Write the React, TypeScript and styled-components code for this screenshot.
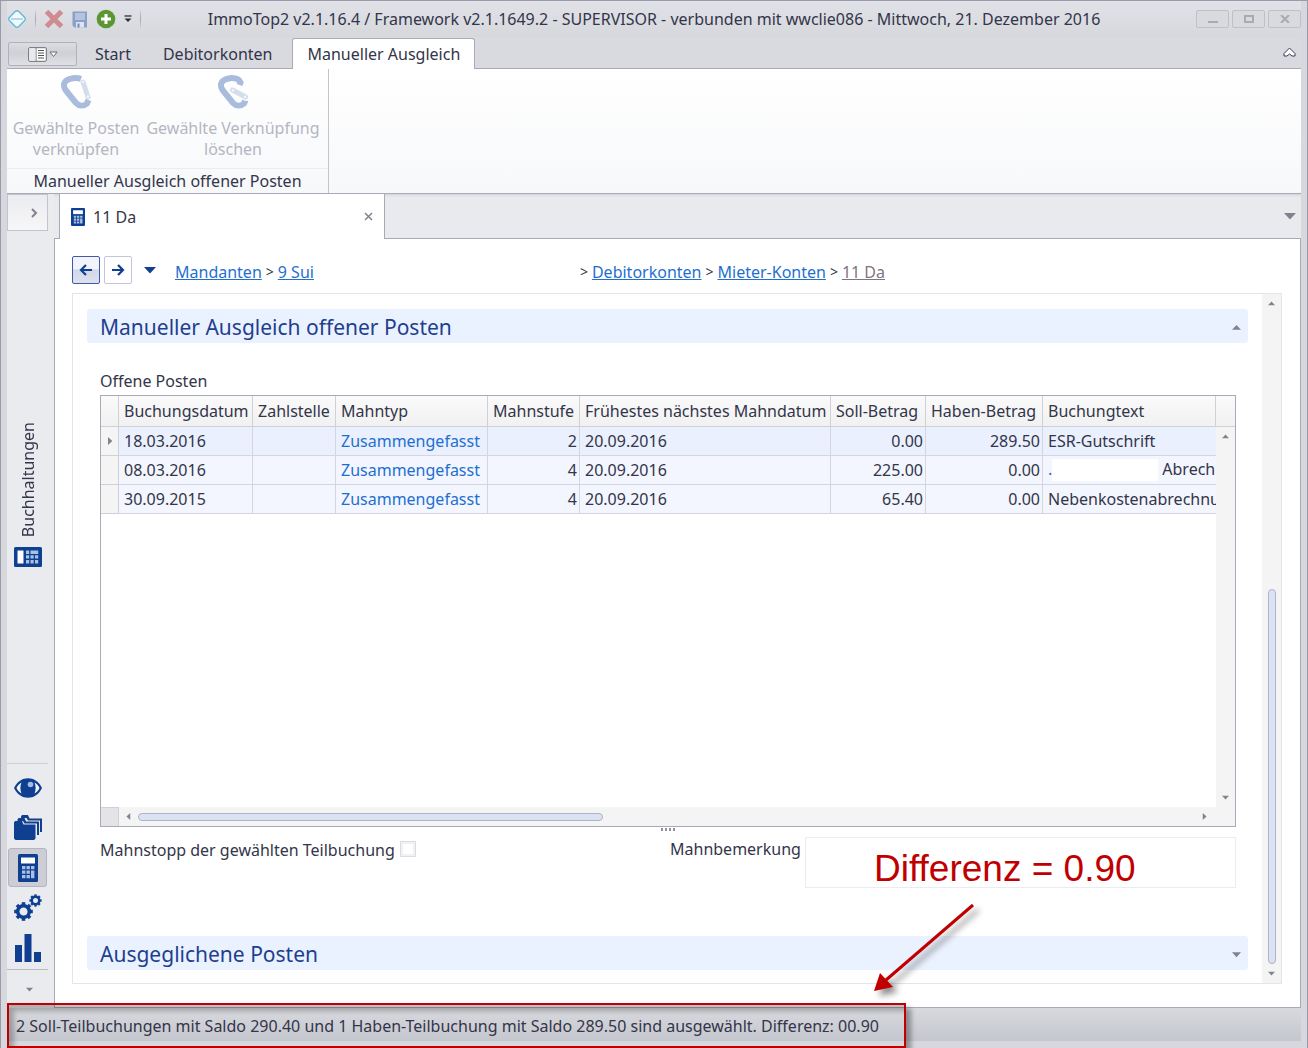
import React from "react";
import styled, { createGlobalStyle, css } from "styled-components";

const uiFont = '"Noto Sans", "Open Sans", sans-serif';
const ink = "#33354a";
const line = "#a9aab8";

const GlobalStyle = createGlobalStyle`
  *, *::before, *::after { box-sizing: border-box; }
  body { margin: 0; }
  button, input, textarea { font: inherit; color: inherit; margin: 0; }
`;

const Window = styled.div`
  position: relative;
  display: flex;
  flex-direction: column;
  min-height: 100vh;
  padding: 0 6px;
  border: 1px solid #9b9aab;
  border-bottom: 0;
  background: #d6d8de;
  font: 16px/20px ${uiFont};
  color: ${ink};
`;

const TitleBar = styled.header`
  display: grid;
  grid-template-columns: 1fr auto 1fr;
  align-items: center;
  height: 36px;
  background: linear-gradient(#e1e2e8, #d6d8dc);
`;

const Title = styled.h1`
  margin: 0;
  font-size: 16px;
  font-weight: 400;
  line-height: 20px;
  white-space: nowrap;
`;

const QuickBar = styled.div`
  display: flex;
  align-items: center;
  gap: 8px;
`;

const IconButton = styled.button`
  display: flex;
  align-items: center;
  justify-content: center;
  padding: 0;
  border: 0;
  background: none;
`;

const Divider = styled.span`
  width: 1px;
  height: 18px;
  background: linear-gradient(#d0d1d8, #a4a5b0, #d0d1d8);
`;

const WindowButtons = styled.div`
  display: flex;
  justify-content: flex-end;
  gap: 3px;
`;

const WindowButton = styled(IconButton)`
  width: 33px;
  height: 18px;
  border: 1px solid #bfc0c7;
  border-radius: 2px;
  background: #d9dade;
`;

const RibbonTabs = styled.nav`
  display: flex;
  align-items: flex-end;
  height: 32px;
  border-bottom: 1px solid ${line};
  background: #d8dadf;
`;

const AppMenu = styled(IconButton)`
  width: 69px;
  height: 24px;
  margin: 0 2px 2px 1px;
  gap: 2px;
  border: 1px solid #b0b1bb;
  border-radius: 2px;
  background: linear-gradient(#dcdde2, #cfd0d6 45%, #dfe0e4);
`;

const RibbonTab = styled.button<{ $active?: boolean }>`
  height: 29px;
  padding: 0 15px;
  border: 1px solid transparent;
  border-bottom: 0;
  background: none;
  line-height: 20px;
  white-space: nowrap;
  ${(p) =>
    p.$active &&
    css`
      height: 31px;
      margin: 0 0 -1px 4px;
      padding: 0 14px;
      border-color: ${line};
      border-radius: 3px 3px 0 0;
      background: #fff;
    `}
`;

const CollapseRibbon = styled(IconButton)`
  align-self: center;
  margin: 0 5px 0 auto;
`;

const Ribbon = styled.section`
  display: flex;
  height: 125px;
  border-bottom: 1px solid ${line};
  background: linear-gradient(#ffffff, #f7f8fa);
`;

const RibbonGroup = styled.div`
  display: flex;
  flex-direction: column;
  width: 322px;
  border-right: 1px solid #c3c4ce;
`;

const RibbonActions = styled.div`
  display: flex;
  flex: 1;
  gap: 2px;
  padding: 4px 4px 0;
`;

const RibbonAction = styled.button<{ $grow?: boolean }>`
  display: flex;
  flex-direction: column;
  align-items: center;
  width: ${(p) => (p.$grow ? "180px" : "130px")};
  gap: 8px;
  padding: 0;
  border: 0;
  background: none;
  color: #b4b6c2;
  line-height: 21px;
  white-space: nowrap;
`;

const RibbonCaption = styled.div`
  padding: 2px 0;
  border-top: 1px solid #ececf0;
  text-align: center;
  white-space: nowrap;
`;

const Body = styled.div`
  display: flex;
  flex: 1;
`;

const Sidebar = styled.aside`
  display: flex;
  flex-direction: column;
  width: 47px;
  background: #eaebef;
`;

const SidebarToggle = styled(IconButton)`
  width: 41px;
  height: 37px;
  padding: 0 9px 0 0;
  justify-content: flex-end;
  border: 1px solid #c3c4cd;
  background: linear-gradient(#ebecf0, #f6f6f8);
`;

const SidebarLabel = styled.div`
  display: flex;
  flex: 1;
  flex-direction: column;
  align-items: center;
  justify-content: flex-end;
  gap: 10px;
  width: 41px;
  padding-bottom: 196px;
`;

const VerticalText = styled.span`
  writing-mode: vertical-rl;
  transform: rotate(180deg);
  line-height: 20px;
`;

const ModuleList = styled.div`
  display: flex;
  flex-direction: column;
  gap: 1px;
  width: 41px;
  padding: 4px 0 2px;
  border-top: 1px solid #cfd0d6;
  border-bottom: 1px solid #b9bac4;
`;

const ModuleButton = styled(IconButton)<{ $active?: boolean }>`
  width: 39px;
  height: 39px;
  margin-left: 1px;
  border: 1px solid ${(p) => (p.$active ? "#b4b5c0" : "transparent")};
  border-radius: 3px;
  background: ${(p) => (p.$active ? "#cdced5" : "none")};
`;

const MoreModules = styled(IconButton)`
  width: 45px;
  height: 38px;
`;

const Main = styled.main`
  display: flex;
  flex: 1;
  flex-direction: column;
  min-width: 0;
`;

const DocTabs = styled.div`
  display: flex;
  align-items: center;
  justify-content: space-between;
  height: 44px;
  padding: 0 5px;
  background: #e9eaee;
  box-shadow: inset 0 3px 3px -2px #cfd0d6;
`;

const DocTab = styled.div`
  display: flex;
  align-items: center;
  gap: 8px;
  width: 326px;
  height: 45px;
  margin-bottom: -1px;
  padding: 0 11px;
  border: solid ${line};
  border-width: 0 1px;
  background: #fff;
  z-index: 1;

  & > button { margin-left: auto; }
`;

const Page = styled.div`
  display: flex;
  flex: 1;
  flex-direction: column;
  padding: 17px 18px 23px 17px;
  border: 1px solid ${line};
  background: #fff;
`;

const Crumbs = styled.nav`
  display: flex;
  align-items: center;
  gap: 4px;
  height: 28px;
  margin-bottom: 9px;
  white-space: nowrap;
`;

const NavButton = styled(IconButton)<{ $active?: boolean }>`
  width: 28px;
  height: 28px;
  border: 1px solid ${(p) => (p.$active ? "#3f5ca8" : "#c3c6d8")};
  border-radius: 2px;
  background: ${(p) =>
    p.$active ? "linear-gradient(#f3f4fb 45%, #d3d7e9 50%, #dde0ee)" : "#fff"};
`;

const HistoryButton = styled(IconButton)`
  width: 28px;
`;

const Trail = styled.span`
  display: flex;
  gap: 4px;
  padding: 3px 0 0 7px;
`;

const SubTrail = styled(Trail)`
  padding-left: 262px;
`;

const Crumb = styled.a<{ $current?: boolean }>`
  color: ${(p) => (p.$current ? "#7f7480" : "#1f6fd0")};
`;

const Chevron = styled.span`
  font-size: 14px;
`;

const Panel = styled.div`
  display: flex;
  flex: 1;
  border: 1px solid #e4e5e8;
`;

const PanelContent = styled.div`
  display: flex;
  flex: 1;
  flex-direction: column;
  min-width: 0;
  padding: 15px 14px 13px;
`;

const SectionHeader = styled.button`
  display: flex;
  align-items: center;
  justify-content: space-between;
  height: 34px;
  padding: 2px 7px 0 13px;
  border: 0;
  border-radius: 3px;
  background: #ebf2ff;
  color: #1e408f;
  font-size: 21px;
  line-height: 28px;
`;

const SectionBody = styled.div`
  display: flex;
  flex: 1;
  flex-direction: column;
  padding: 28px 12px 0 13px;
`;

const GridFrame = styled.div`
  display: flex;
  flex: 1;
  flex-direction: column;
  margin-top: 4px;
  border: 1px solid ${line};
`;

const GridArea = styled.div`
  display: flex;
  flex: 1;
`;

const TableClip = styled.div`
  flex: 1;
  min-width: 0;
  overflow: hidden;
`;

const Table = styled.table`
  width: 100%;
  table-layout: fixed;
  border-collapse: separate;
  border-spacing: 0;
`;

const Col = styled.col<{ $w?: number }>`
  ${(p) => p.$w && `width: ${p.$w}px;`}
`;

const Th = styled.th`
  height: 31px;
  padding: 0 0 0 5px;
  border: solid #cfd0d8;
  border-width: 0 1px 1px 0;
  background: linear-gradient(#fafafa, #f1f1f2);
  font-weight: 400;
  text-align: left;
  white-space: nowrap;
`;

const Row = styled.tr<{ $focused?: boolean }>`
  background: ${(p) => (p.$focused ? "#eaf0fe" : "#f3f6fe")};
`;

const Td = styled.td<{ $right?: boolean; $link?: boolean }>`
  height: 29px;
  padding: 0 2px 0 5px;
  border: solid #d3d5df;
  border-width: 0 1px 1px 0;
  color: ${(p) => (p.$link ? "#1f6fd0" : "inherit")};
  text-align: ${(p) => (p.$right ? "right" : "left")};
  white-space: nowrap;
  overflow: hidden;

  &:last-child { border-right: 0; padding-right: 0; }
`;

const Marker = styled.td`
  padding: 0 0 0 5px;
  border: solid #cfd0d8;
  border-width: 0 1px 1px 0;
  background: #f4f4f5;
  line-height: 0;
`;

const Blank = styled.span`
  display: inline-block;
  width: 106px;
  height: 22px;
  margin-right: 4px;
  background: #fff;
  vertical-align: -6px;
`;

const BlueDot = styled.span`
  color: #1f6fd0;
`;

const GridSide = styled.div`
  display: flex;
  flex-direction: column;
  width: 19px;
`;

const SideHead = styled.div`
  height: 31px;
  border-bottom: 1px solid #cfd0d8;
  background: linear-gradient(#fafafa, #f1f1f2);
`;

const VScroll = styled.div`
  display: flex;
  flex-direction: column;
  align-items: center;
  justify-content: space-between;
  width: 19px;
  padding: 6px 0;
  background: #f4f4f4;
`;

const GridScroll = styled(VScroll)`
  flex: 1;
`;

const VThumb = styled.div`
  flex: 0 0 375px;
  width: 8px;
  margin: auto 0 6px;
  border: 1px solid #b0b4c4;
  border-radius: 4px;
  background: #dbe2f3;
`;

const HScroll = styled.div`
  display: flex;
  align-items: center;
  height: 19px;
  padding-right: 27px;
  background: #f4f4f4;
`;

const HCorner = styled.span`
  width: 18px;
  height: 19px;
  margin-right: 6px;
  border: solid #cfd0d8;
  border-width: 1px 1px 0 0;
  background: #e3e3e8;
`;

const HTrack = styled.div`
  flex: 1;
  padding: 0 6px;
`;

const HThumb = styled.div`
  width: 44%;
  height: 8px;
  border: 1px solid #b0b4c4;
  border-radius: 4px;
  background: #dbe2f3;
`;

const Splitter = styled.div`
  display: flex;
  justify-content: center;
  gap: 2px;
  height: 10px;
  padding-top: 1px;

  & > i { width: 2px; height: 3px; background: #8f919f; }
`;

const FormRow = styled.div`
  display: flex;
  height: 51px;
`;

const CheckField = styled.div`
  display: flex;
  align-items: flex-start;
  gap: 5px;
  flex: 0 0 570px;
  padding-top: 3px;
  white-space: nowrap;
`;

const Check = styled.input`
  appearance: none;
  width: 16px;
  height: 16px;
  margin-top: 1px;
  border: 3px solid #f1f1f3;
  outline: 1px solid #dcdde2;
  outline-offset: -1px;
  background: #fff;
`;

const NoteField = styled.div`
  position: relative;
  display: flex;
  flex: 1;

  & > label { width: 135px; padding-top: 2px; }
`;

const Note = styled.textarea`
  flex: 1;
  min-width: 0;
  border: 1px solid #ebecef;
  background: #fff;
  resize: none;
`;

const Callout = styled.strong`
  position: absolute;
  top: 12px;
  left: 204px;
  color: #c00000;
  font: 400 37px/40px "Liberation Sans", Arial, sans-serif;
  white-space: nowrap;
  pointer-events: none;
`;

const ArrowDrawing = styled.svg`
  position: absolute;
  top: 62px;
  left: 196px;
  overflow: visible;
  filter: drop-shadow(5px 5px 3px rgba(0, 0, 0, 0.45));
  pointer-events: none;
  z-index: 2;
`;

const FooterSection = styled.div`
  display: flex;
  flex-direction: column;
  padding-top: 48px;
`;

const StatusBar = styled.footer`
  position: relative;
  height: 40px;
  padding: 8px 9px 0;
  background: linear-gradient(#d8d9de, #c5c7ce 82%, #d6d8de 84%);
  white-space: nowrap;
`;

const StatusMark = styled.span`
  position: absolute;
  top: -5px;
  left: 0;
  width: 899px;
  height: 45px;
  border: 2px solid #c00000;
  box-shadow: 5px 5px 5px rgba(0, 0, 0, 0.35), inset 5px 6px 5px rgba(0, 0, 0, 0.25);
  pointer-events: none;
`;

type Dir = "up" | "down" | "left" | "right";
const turns: Record<Dir, number> = { up: 180, down: 0, left: 90, right: 270 };

function Caret({ dir = "down", size = 8, color = "#80828f" }: { dir?: Dir; size?: number; color?: string }) {
  return (
    <svg width={size} height={size} viewBox="0 0 12 12" aria-hidden="true">
      <path d="M0 3h12L6 9.500z" fill={color} transform={`rotate(${turns[dir]} 6 6)`} />
    </svg>
  );
}

function LogoIcon() {
  return (
    <svg width="20" height="20" viewBox="0 0 20 20" aria-hidden="true">
      <rect x="3.500" y="3.500" width="13" height="13" rx="2.500" transform="rotate(45 10 10)" fill="#f3f8fb" stroke="#5db9d8" strokeWidth="1.300" />
      <path d="M4 10h12" stroke="#9fd2e4" strokeWidth="1.600" />
    </svg>
  );
}

function CrossIcon() {
  return (
    <svg width="20" height="20" viewBox="0 0 20 20" aria-hidden="true">
      <path d="M2.500 2.500L17.500 17.500M17.500 2.500L2.500 17.500" stroke="#d08b90" strokeWidth="5" />
    </svg>
  );
}

function SaveIcon() {
  return (
    <svg width="16" height="17" viewBox="0 0 16 17" aria-hidden="true">
      <path d="M1 .5h14v16H2.500L.5 14.500V1z" fill="#8aa0c8" />
      <path d="M3 2h10v7H3z" fill="#b4c3de" />
      <path d="M4 11h8v5.500H4z" fill="#dfe5f0" />
      <path d="M5.500 12.500h2v4h-2z" fill="#6f89b8" />
    </svg>
  );
}

function AddIcon() {
  return (
    <svg width="20" height="20" viewBox="0 0 20 20" aria-hidden="true">
      <circle cx="10" cy="10" r="9.300" fill="#5a9632" />
      <path d="M10 5v10M5 10h10" stroke="#fff" strokeWidth="3" />
    </svg>
  );
}

function MenuCaret() {
  return (
    <svg width="8" height="8" viewBox="0 0 8 8" aria-hidden="true">
      <path d="M.5 1h7" stroke="#2a2c3a" strokeWidth="1.300" />
      <path d="M.5 3.500h7L4 7z" fill="#2a2c3a" />
    </svg>
  );
}

function PaneIcon() {
  return (
    <svg width="19" height="15" viewBox="0 0 19 15" fill="none" aria-hidden="true">
      <rect x=".7" y=".7" width="17.600" height="13.600" rx="1" fill="#fff" stroke="#696a74" />
      <path d="M8 1v13" stroke="#696a74" />
      <path d="M10 3.500h6M10 6h6M10 8.500h6M10 11h6" stroke="#555" strokeWidth="1.200" />
      <path d="M1.500 1.500h6v12h-6z" fill="#e8e9ed" />
    </svg>
  );
}

function Carabiner({ open }: { open?: boolean }) {
  return (
    <svg width="32" height="37" viewBox="0 0 32 37" fill="none" aria-hidden="true">
      <path
        d={
          open
            ? "M22.500 12L23.500 9.500C22 6 18 4.800 13 5.200C4.500 6.500 2 11 5.500 17L16 30C19 33.200 23.500 33.500 27 30.500L28.500 27"
            : "M21 6C18.500 5 16 5 13 5.200C4.500 6.500 2 11 5.500 17L16 30C19 33.200 23.500 33.500 27 30.500L28.500 27"
        }
        stroke="#a9bcdd"
        strokeWidth="6"
      />
      {open && <path d="M15.500 17L28.500 24" stroke="#fdfdfe" strokeWidth="7.600" strokeLinecap="round" />}
      <path d={open ? "M15.500 17L28.500 24" : "M23 9L28 24"} stroke="#d3deed" strokeWidth="5" strokeLinecap="round" />
      <circle cx={open ? 16 : 23} cy={open ? 17.200 : 9} r="1.200" fill="#f4f7fb" />
      <circle cx="28" cy={open ? 23.800 : 23.500} r="1.200" fill="#f4f7fb" />
    </svg>
  );
}

const navy = "#0f3f90";

function CalculatorIcon({ width, height }: { width: number; height: number }) {
  return (
    <svg width={width} height={height} viewBox="0 0 20 28" preserveAspectRatio="none" aria-hidden="true">
      <rect width="20" height="28" rx="1.500" fill={navy} />
      <path d="M3 3.500h14v6H3z" fill="#fff" />
      <path
        d="M4 12h3.400v3.200H4zM8.500 12h3.400v3.200H8.500zM13 12h3.400v3.200H13zM4 16.500h3.400v3.200H4zM8.500 16.500h3.400v3.200H8.500zM4 21h3.400v3.200H4zM8.500 21h3.400v3.200H8.500zM13 16.500h3.400v7.700H13z"
        fill="#a9c0e4"
      />
    </svg>
  );
}

function LedgerIcon() {
  return (
    <svg width="28" height="20" viewBox="0 0 28 20" aria-hidden="true">
      <rect width="28" height="20" rx="1.500" fill={navy} />
      <path d="M3.500 3.500h6v13h-6z" fill="#fff" />
      <path
        d="M12 3.500h3.200v3.400H12zM12 8.200h3.200v3.400H12zM12 13h3.200v3.500H12zM16.500 3.500h7.700v3.400h-7.700zM16.500 8.200h3.200v3.400h-3.200zM16.500 13h3.200v3.500h-3.200zM21 8.200h3.200v3.400H21zM21 13h3.200v3.500H21z"
        fill="#a9c0e4"
      />
    </svg>
  );
}

function EyeIcon() {
  return (
    <svg width="28" height="20" viewBox="0 0 28 20" aria-hidden="true">
      <path d="M0 10C6-3 22-3 28 10C22 23 6 23 0 10z" fill={navy} />
      <path d="M2.500 10C3.500 7.500 5.500 5.500 7.500 4.500C6 8 6 12 7.500 15.500C5.500 14.500 3.500 12.500 2.500 10zM25.500 10C24.500 7.500 22.500 5.500 20.500 4.500C22 8 22 12 20.500 15.500C22.500 14.500 24.500 12.500 25.500 10z" fill="#f3f5f9" />
      <circle cx="16.500" cy="6.500" r="2.800" fill="#9fc0e4" />
    </svg>
  );
}

function FoldersIcon() {
  return (
    <svg width="28" height="25" viewBox="0 0 28 25" fill={navy} aria-hidden="true">
      <path d="M7 3V1.500L8 0h6l1.500 3.500H28V17h-2V5.500H14L12.500 3z" />
      <path d="M3.500 6V4.500L4.500 3h6L12 6.500h13V20h-2V8.500H10.500L9 6z" />
      <path d="M0 7.500L1 6h7l1.500 3.500H21.500V23.500L20 25H1.500L0 23.500z" />
    </svg>
  );
}

function Gear({ cx, cy, r, w }: { cx: number; cy: number; r: number; w: number }) {
  const teeth = [0, 45, 90, 135, 180, 225, 270, 315];
  return (
    <g>
      <circle cx={cx} cy={cy} r={r} fill="none" stroke={navy} strokeWidth={w} />
      {teeth.map((a) => (
        <rect key={a} x={cx - w / 2} y={cy - r - w} width={w} height={w} fill={navy} transform={`rotate(${a} ${cx} ${cy})`} />
      ))}
    </g>
  );
}

function GearsIcon() {
  return (
    <svg width="28" height="28" viewBox="0 0 28 28" aria-hidden="true">
      <Gear cx={9.500} cy={17.500} r={5.800} w={3.500} />
      <Gear cx={21.500} cy={6.500} r={3.700} w={2.400} />
    </svg>
  );
}

function ChartIcon() {
  return (
    <svg width="26" height="28" viewBox="0 0 26 28" aria-hidden="true">
      <path d="M0 11h7v17H0zM9.500 0h7v28h-7zM19 18h7v10h-7z" fill={navy} />
    </svg>
  );
}

function ArrowIcon({ back }: { back?: boolean }) {
  return (
    <svg width="14" height="12" viewBox="0 0 14 12" fill="none" aria-hidden="true">
      <path d={back ? "M13 6H2.500M7 1L2 6L7 11" : "M1 6H11.500M7 1L12 6L7 11"} stroke={navy} strokeWidth="2.200" />
    </svg>
  );
}

interface Posting {
  date: string;
  level: number;
  debit: string;
  credit: string;
  text: React.ReactNode;
}

const postings: Posting[] = [
  { date: "18.03.2016", level: 2, debit: "0.00", credit: "289.50", text: "ESR-Gutschrift" },
  { date: "08.03.2016", level: 4, debit: "225.00", credit: "0.00", text: <><BlueDot>.</BlueDot><Blank />Abrech</> },
  { date: "30.09.2015", level: 4, debit: "65.40", credit: "0.00", text: "Nebenkostenabrechnung" },
];

const columns: { label: string; width?: number }[] = [
  { label: "Buchungsdatum", width: 134 },
  { label: "Zahlstelle", width: 83 },
  { label: "Mahntyp", width: 152 },
  { label: "Mahnstufe", width: 92 },
  { label: "Frühestes nächstes Mahndatum", width: 251 },
  { label: "Soll-Betrag", width: 95 },
  { label: "Haben-Betrag", width: 117 },
  { label: "Buchungtext" },
];

export default function App() {
  return (
    <Window>
      <GlobalStyle />
      <TitleBar>
        <QuickBar>
          <LogoIcon />
          <Divider />
          <IconButton aria-label="Abbrechen"><CrossIcon /></IconButton>
          <IconButton aria-label="Speichern"><SaveIcon /></IconButton>
          <IconButton aria-label="Neu"><AddIcon /></IconButton>
          <IconButton aria-label="Anpassen"><MenuCaret /></IconButton>
          <Divider />
        </QuickBar>
        <Title>ImmoTop2 v2.1.16.4 / Framework v2.1.1649.2 - SUPERVISOR - verbunden mit wwclie086 - Mittwoch, 21. Dezember 2016</Title>
        <WindowButtons>
          <WindowButton aria-label="Minimieren">
            <svg width="12" height="8" viewBox="0 0 12 8"><path d="M1 7h10" stroke="#a9aab3" strokeWidth="2" /></svg>
          </WindowButton>
          <WindowButton aria-label="Maximieren">
            <svg width="10" height="8" viewBox="0 0 10 8"><rect x="1" y="1" width="8" height="6" fill="none" stroke="#a9aab3" strokeWidth="2" /></svg>
          </WindowButton>
          <WindowButton aria-label="Schliessen">
            <svg width="10" height="8" viewBox="0 0 10 8"><path d="M1 0l8 8M9 0L1 8" stroke="#a9aab3" strokeWidth="2" /></svg>
          </WindowButton>
        </WindowButtons>
      </TitleBar>

      <RibbonTabs>
        <AppMenu aria-label="Menü">
          <PaneIcon />
          <svg width="9" height="7" viewBox="0 0 9 7"><path d="M1 1h7L4.500 5.500z" fill="#fff" stroke="#696a74" /></svg>
        </AppMenu>
        <RibbonTab>Start</RibbonTab>
        <RibbonTab>Debitorkonten</RibbonTab>
        <RibbonTab $active>Manueller Ausgleich</RibbonTab>
        <CollapseRibbon aria-label="Menüband minimieren">
          <svg width="13" height="11" viewBox="0 0 13 11">
            <path d="M6.500 1L12 6.500V9H9L6.500 7L4 9H1V6.500z" fill="#fff" stroke="#3a3c50" strokeLinejoin="round" />
          </svg>
        </CollapseRibbon>
      </RibbonTabs>

      <Ribbon>
        <RibbonGroup>
          <RibbonActions>
            <RibbonAction>
              <Carabiner />
              <span>Gewählte Posten<br />verknüpfen</span>
            </RibbonAction>
            <RibbonAction $grow>
              <Carabiner open />
              <span>Gewählte Verknüpfung<br />löschen</span>
            </RibbonAction>
          </RibbonActions>
          <RibbonCaption>Manueller Ausgleich offener Posten</RibbonCaption>
        </RibbonGroup>
      </Ribbon>

      <Body>
        <Sidebar>
          <SidebarToggle aria-label="Navigation öffnen">
            <svg width="8" height="10" viewBox="0 0 8 10"><path d="M2 1l4 4l-4 4" fill="none" stroke="#80828f" strokeWidth="2" /></svg>
          </SidebarToggle>
          <SidebarLabel>
            <VerticalText>Buchhaltungen</VerticalText>
            <LedgerIcon />
          </SidebarLabel>
          <ModuleList>
            <ModuleButton aria-label="Übersicht"><EyeIcon /></ModuleButton>
            <ModuleButton aria-label="Ordner"><FoldersIcon /></ModuleButton>
            <ModuleButton aria-label="Buchhaltungen" $active><CalculatorIcon width={20} height={28} /></ModuleButton>
            <ModuleButton aria-label="Einstellungen"><GearsIcon /></ModuleButton>
            <ModuleButton aria-label="Auswertungen"><ChartIcon /></ModuleButton>
          </ModuleList>
          <MoreModules aria-label="Weitere"><Caret size={7} /></MoreModules>
        </Sidebar>

        <Main>
          <DocTabs>
            <DocTab>
              <CalculatorIcon width={14} height={18} />
              <span>11 Da</span>
              <IconButton aria-label="Register schliessen">
                <svg width="9" height="9" viewBox="0 0 9 9"><path d="M1 1l7 7M8 1L1 8" stroke="#80828f" strokeWidth="1.500" /></svg>
              </IconButton>
            </DocTab>
            <IconButton aria-label="Registerliste"><Caret size={12} /></IconButton>
          </DocTabs>

          <Page>
            <Crumbs>
              <NavButton $active aria-label="Zurück"><ArrowIcon back /></NavButton>
              <NavButton aria-label="Vorwärts"><ArrowIcon /></NavButton>
              <HistoryButton aria-label="Verlauf"><Caret size={12} color={navy} /></HistoryButton>
              <Trail>
                <Crumb href="#mandanten">Mandanten</Crumb>
                <Chevron>&gt;</Chevron>
                <Crumb href="#mandant">9 Sui</Crumb>
              </Trail>
              <SubTrail>
                <Chevron>&gt;</Chevron>
                <Crumb href="#debitorkonten">Debitorkonten</Crumb>
                <Chevron>&gt;</Chevron>
                <Crumb href="#mieter">Mieter-Konten</Crumb>
                <Chevron>&gt;</Chevron>
                <Crumb href="#konto" $current>11 Da</Crumb>
              </SubTrail>
            </Crumbs>

            <Panel>
              <PanelContent>
                <SectionHeader>
                  Manueller Ausgleich offener Posten
                  <Caret dir="up" size={9} />
                </SectionHeader>
                <SectionBody>
                  <span>Offene Posten</span>
                  <GridFrame>
                    <GridArea>
                      <TableClip>
                        <Table>
                          <colgroup>
                            <Col $w={18} />
                            {columns.map((c) => <Col key={c.label} $w={c.width} />)}
                          </colgroup>
                          <thead>
                            <tr>
                              <Th />
                              {columns.map((c) => <Th key={c.label}>{c.label}</Th>)}
                            </tr>
                          </thead>
                          <tbody>
                            {postings.map((p, i) => (
                              <Row key={p.date} $focused={i === 0}>
                                <Marker>{i === 0 && <Caret dir="right" />}</Marker>
                                <Td>{p.date}</Td>
                                <Td />
                                <Td $link>Zusammengefasst</Td>
                                <Td $right>{p.level}</Td>
                                <Td>20.09.2016</Td>
                                <Td $right>{p.debit}</Td>
                                <Td $right>{p.credit}</Td>
                                <Td>{p.text}</Td>
                              </Row>
                            ))}
                          </tbody>
                        </Table>
                      </TableClip>
                      <GridSide>
                        <SideHead />
                        <GridScroll>
                          <Caret dir="up" size={7} />
                          <Caret size={7} />
                        </GridScroll>
                      </GridSide>
                    </GridArea>
                    <HScroll>
                      <HCorner />
                      <Caret dir="left" size={7} />
                      <HTrack><HThumb /></HTrack>
                      <Caret dir="right" size={7} />
                    </HScroll>
                  </GridFrame>
                  <Splitter><i /><i /><i /><i /></Splitter>
                  <FormRow>
                    <CheckField>
                      <label htmlFor="mahnstopp">Mahnstopp der gewählten Teilbuchung</label>
                      <Check id="mahnstopp" type="checkbox" />
                    </CheckField>
                    <NoteField>
                      <label htmlFor="mahnbemerkung">Mahnbemerkung</label>
                      <Note id="mahnbemerkung" />
                      <Callout>Differenz = 0.90</Callout>
                      <ArrowDrawing width="110" height="96" viewBox="0 0 110 96" aria-hidden="true">
                        <path d="M107 6L20 81" stroke="#c00000" strokeWidth="3" />
                        <path d="M8 92L14 74L27 88z" fill="#c00000" />
                      </ArrowDrawing>
                    </NoteField>
                  </FormRow>
                </SectionBody>
                <FooterSection>
                  <SectionHeader>
                    Ausgeglichene Posten
                    <Caret size={9} />
                  </SectionHeader>
                </FooterSection>
              </PanelContent>
              <VScroll>
                <Caret dir="up" size={7} />
                <VThumb />
                <Caret size={7} />
              </VScroll>
            </Panel>
          </Page>
        </Main>
      </Body>

      <StatusBar>
        2 Soll-Teilbuchungen mit Saldo 290.40 und 1 Haben-Teilbuchung mit Saldo 289.50 sind ausgewählt. Differenz: 00.90
        <StatusMark />
      </StatusBar>
    </Window>
  );
}
